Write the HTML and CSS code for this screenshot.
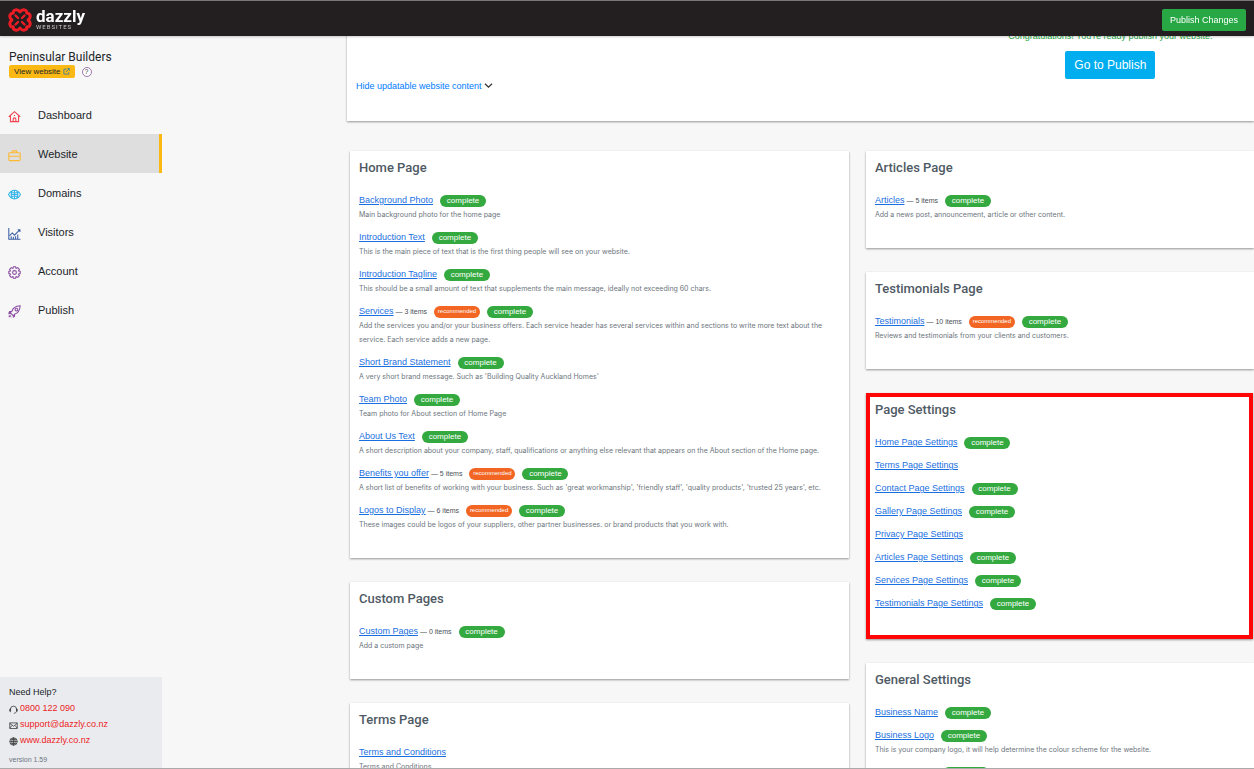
FILE: index.html
```
<!DOCTYPE html>
<html lang="en">
<head>
  <meta charset="UTF-8" />
  <meta name="viewport" content="width=device-width, initial-scale=1.0" />
  <title>Dazzly Websites - Website</title>
  <link rel="stylesheet" href="styles.css">
</head>
<body>

  <header class="topbar">
    <a class="logo" href="#">
      <svg class="logo-mark" viewBox="0 0 24 24" aria-hidden="true">
        <g fill="none" stroke="#ed1c24" stroke-width="3" stroke-linejoin="round" stroke-linecap="round">
          <path d="M12 4 C9.500 .5 5 1.500 5.200 5.200 C1.500 5 .5 9.500 4 12 C.5 14.500 1.500 19 5.200 18.800 C5 22.500 9.500 23.500 12 20 C14.500 23.500 19 22.500 18.800 18.800 C22.500 19 23.500 14.500 20 12 C23.500 9.500 22.500 5 18.800 5.200 C19 1.500 14.500 .5 12 4 Z"/>
          <path d="M7.500 7.500 L10 10 M16.500 7.500 L14 10 M7.500 16.500 L10 14 M16.500 16.500 L14 14" stroke-width="2.400"/>
        </g>
      </svg>
      <span class="logo-text">
        <span class="logo-name">dazzly</span>
        <span class="logo-sub">WEBSITES</span>
      </span>
    </a>
    <button class="btn btn-green" type="button">Publish Changes</button>
  </header>

  <div class="layout">
    <aside class="sidebar">
      <div class="site">
        <div class="site-name">Peninsular Builders</div>
        <div class="site-links">
          <a class="view-site" href="#">View website
            <svg viewBox="0 0 12 12" aria-hidden="true"><path d="M6 2H1.500v8.500H10V7M5 7l6-6M7.500 1H11v3.500" fill="none" stroke="#3d7f9f" stroke-width="1.500"/></svg>
          </a>
          <button class="help" type="button" aria-label="Help">?</button>
        </div>
      </div>

      <nav class="menu">
        <a href="#">
          <svg class="c-red" viewBox="0 0 24 24"><path d="M1.500 12.500 12 3l10.500 9.500M4.500 10v11.500h15V10M9.500 21.500V17a2.500 2.500 0 0 1 5 0v4.500M12 9v2"/></svg>
          Dashboard
        </a>
        <a class="active" href="#">
          <svg class="c-yellow" viewBox="0 0 24 24"><path d="M3 7h18a1.500 1.500 0 0 1 1.500 1.500v11A2 2 0 0 1 20.500 21.500h-17a2 2 0 0 1-2-2v-11A1.500 1.500 0 0 1 3 7zM8 7V3.500h8V7M1.500 13.500h21"/></svg>
          Website
        </a>
        <a href="#">
          <svg class="c-blue" viewBox="0 0 24 24"><path d="M1 12c2-4 6-8 11-8s9 4 11 8c-2 4-6 8-11 8s-9-4-11-8zM12 4v16M5 7.500c4 2 10 2 14 0M5 16.500c4-2 10-2 14 0M8 5c-3 5-3 9 0 14M16 5c3 5 3 9 0 14M7 12h10"/></svg>
          Domains
        </a>
        <a href="#">
          <svg class="c-navy" viewBox="0 0 24 24"><path d="M1.500 2v20.500H23M3 16l5-5 4 4 10-10M18 5h4v4M6 22v-5M10 22v-4M14 22v-5M18 22v-8"/></svg>
          Visitors
        </a>
        <a href="#">
          <svg class="c-purple" viewBox="0 0 24 24"><path d="M10 1.500h4l1 3 3-1.500 3 3-1.500 3 3 1v4l-3 1 1.500 3-3 3-3-1.500-1 3h-4l-1-3L6 21l-3-3 1.500-3-3-1v-4l3-1L3 6l3-3 3 1.500z"/><circle cx="12" cy="12" r="3.500"/></svg>
          Account
        </a>
        <a href="#">
          <svg class="c-purple" viewBox="0 0 24 24"><path d="M7 12C9 5 15 2 22.500 1.500 22 9 19 15 12 17l-2 3-6-6zM7 12H3l-1.500 3L5 16M12 17v4l-3 1.500M1.500 22.500l3.500-3.500M1.500 19l1-1M5 22.500l1-1"/><circle cx="15.500" cy="8.500" r="2.500"/></svg>
          Publish
        </a>
      </nav>

      <div class="support">
        <div class="support-title">Need Help?</div>
        <div class="support-row">
          <svg viewBox="0 0 24 24"><path d="M4 15V11a8 8 0 0 1 16 0v4M4 10c-4 1-4 7 0 8V10zM20 10c4 1 4 7 0 8V10zM19 18c-1 3-3 4-6 4"/></svg>
          <a href="#">0800 122 090</a>
        </div>
        <div class="support-row">
          <svg viewBox="0 0 24 24"><path d="M2 5h20v15H2zM2 6l10 8L22 6M2 19l6-7M22 19l-6-7"/></svg>
          <a href="#">support@dazzly.co.nz</a>
        </div>
        <div class="support-row">
          <svg viewBox="0 0 24 24"><path d="M12 2a10 10 0 1 0 0 20 10 10 0 0 0 0-20zM2 12h20M12 2v20M4 7h16M4 17h16M12 2c-6 6-6 14 0 20M12 2c6 6 6 14 0 20"/></svg>
          <a href="#">www.dazzly.co.nz</a>
        </div>
        <div class="version">version 1.59</div>
      </div>
    </aside>

    <main class="content">
      <section class="card intro">
        <a class="toggle" href="#">Hide updatable website content
          <svg viewBox="0 0 10 8" aria-hidden="true"><path d="M1 2l4 4 4-4" fill="none" stroke="#333" stroke-width="1.400"/></svg>
        </a>
        <div class="status">
          <p>Congratulations! You're ready publish your website.</p>
          <button class="btn btn-blue" type="button">Go to Publish</button>
        </div>
      </section>

      <div class="columns">
        <div class="column">
          <section class="card">
            <h2>Home Page</h2>
            <ul class="items">
              <li>
                <div class="item"><a href="#">Background Photo</a><span class="badge">complete</span></div>
                <p>Main background photo for the home page</p>
              </li>
              <li>
                <div class="item"><a href="#">Introduction Text</a><span class="badge">complete</span></div>
                <p>This is the main piece of text that is the first thing people will see on your website.</p>
              </li>
              <li>
                <div class="item"><a href="#">Introduction Tagline</a><span class="badge">complete</span></div>
                <p>This should be a small amount of text that supplements the main message, ideally not exceeding 60 chars.</p>
              </li>
              <li>
                <div class="item"><a href="#">Services</a><span class="count">— 3 items</span><span class="badge recommended">recommended</span><span class="badge">complete</span></div>
                <p>Add the services you and/or your business offers. Each service header has several services within and sections to write more text about the service. Each service adds a new page.</p>
              </li>
              <li>
                <div class="item"><a href="#">Short Brand Statement</a><span class="badge">complete</span></div>
                <p>A very short brand message. Such as 'Building Quality Auckland Homes'</p>
              </li>
              <li>
                <div class="item"><a href="#">Team Photo</a><span class="badge">complete</span></div>
                <p>Team photo for About section of Home Page</p>
              </li>
              <li>
                <div class="item"><a href="#">About Us Text</a><span class="badge">complete</span></div>
                <p>A short description about your company, staff, qualifications or anything else relevant that appears on the About section of the Home page.</p>
              </li>
              <li>
                <div class="item"><a href="#">Benefits you offer</a><span class="count">— 5 items</span><span class="badge recommended">recommended</span><span class="badge">complete</span></div>
                <p>A short list of benefits of working with your business. Such as 'great workmanship', 'friendly staff', 'quality products', 'trusted 25 years', etc.</p>
              </li>
              <li>
                <div class="item"><a href="#">Logos to Display</a><span class="count">— 6 items</span><span class="badge recommended">recommended</span><span class="badge">complete</span></div>
                <p>These images could be logos of your suppliers, other partner businesses. or brand products that you work with.</p>
              </li>
            </ul>
          </section>

          <section class="card">
            <h2>Custom Pages</h2>
            <ul class="items">
              <li>
                <div class="item"><a href="#">Custom Pages</a><span class="count">— 0 items</span><span class="badge">complete</span></div>
                <p>Add a custom page</p>
              </li>
            </ul>
          </section>

          <section class="card">
            <h2>Terms Page</h2>
            <ul class="items">
              <li>
                <div class="item"><a href="#">Terms and Conditions</a></div>
                <p>Terms and Conditions</p>
              </li>
            </ul>
          </section>
        </div>

        <div class="column">
          <section class="card">
            <h2>Articles Page</h2>
            <ul class="items">
              <li>
                <div class="item"><a href="#">Articles</a><span class="count">— 5 items</span><span class="badge">complete</span></div>
                <p>Add a news post, announcement, article or other content.</p>
              </li>
            </ul>
          </section>

          <section class="card">
            <h2>Testimonials Page</h2>
            <ul class="items">
              <li>
                <div class="item"><a href="#">Testimonials</a><span class="count">— 10 items</span><span class="badge recommended">recommended</span><span class="badge">complete</span></div>
                <p>Reviews and testimonials from your clients and customers.</p>
              </li>
            </ul>
          </section>

          <section class="card highlight">
            <h2>Page Settings</h2>
            <ul class="items">
              <li><div class="item"><a href="#">Home Page Settings</a><span class="badge">complete</span></div></li>
              <li><div class="item"><a href="#">Terms Page Settings</a></div></li>
              <li><div class="item"><a href="#">Contact Page Settings</a><span class="badge">complete</span></div></li>
              <li><div class="item"><a href="#">Gallery Page Settings</a><span class="badge">complete</span></div></li>
              <li><div class="item"><a href="#">Privacy Page Settings</a></div></li>
              <li><div class="item"><a href="#">Articles Page Settings</a><span class="badge">complete</span></div></li>
              <li><div class="item"><a href="#">Services Page Settings</a><span class="badge">complete</span></div></li>
              <li><div class="item"><a href="#">Testimonials Page Settings</a><span class="badge">complete</span></div></li>
            </ul>
          </section>

          <section class="card">
            <h2>General Settings</h2>
            <ul class="items">
              <li><div class="item"><a href="#">Business Name</a><span class="badge">complete</span></div></li>
              <li>
                <div class="item"><a href="#">Business Logo</a><span class="badge">complete</span></div>
                <p>This is your company logo, it will help determine the colour scheme for the website.</p>
              </li>
              <li><div class="item"><a href="#">Business Email</a><span class="badge">complete</span></div></li>
            </ul>
          </section>
        </div>
      </div>
    </main>
  </div>

</body>
</html>
```
FILE: styles.css
```
* {
  box-sizing: border-box;
}
body {
  margin: 0;
  height: 100vh;
  overflow: hidden;
  background: #f7f7f7;
  color: #212529;
  font-family: "Liberation Sans", Arial, sans-serif;
  font-size: 9px;
  line-height: 14px;
}
h2, p, ul {
  margin: 0;
  padding: 0;
}
a {
  text-decoration: none;
}
button {
  font-family: inherit;
  cursor: pointer;
}

/* top bar */
.topbar {
  position: fixed;
  top: 0;
  left: 0;
  right: 0;
  z-index: 10;
  height: 36px;
  padding: 3px 8px 0;
  display: flex;
  align-items: center;
  justify-content: space-between;
  background: #231f20;
  border-top: 1px solid #777;
  box-shadow: 0 1px 2px rgba(0, 0, 0, 0.2);
}
.logo {
  display: flex;
  align-items: center;
  gap: 4px;
  color: #fff;
  font-family: Roboto, sans-serif;
}
.logo-mark {
  width: 24px;
  height: 24px;
}
.logo-text {
  display: flex;
  flex-direction: column;
  padding-bottom: 2px;
}
.logo-name {
  font-size: 17px;
  font-weight: 700;
  line-height: 16px;
}
.logo-sub {
  font-size: 6px;
  line-height: 6px;
  letter-spacing: 1px;
  color: #ccc;
}
.btn {
  border: 0;
  border-radius: 2px;
  color: #fff;
}
.btn-green {
  height: 22px;
  padding: 0 8px;
  font-size: 9px;
  background: #28a745;
}
.btn-blue {
  height: 28px;
  padding: 0 9px;
  font-size: 12px;
  background: #00adef;
}

/* sidebar */
.layout {
  display: flex;
  height: 100vh;
  overflow: hidden;
  border-bottom: 1px solid #aaa;
}
.sidebar {
  flex: 0 0 162px;
  margin-right: 185px;
  padding-top: 50px;
  display: flex;
  flex-direction: column;
}
.site {
  height: 45px;
  padding-left: 9px;
}
.site-name {
  font-family: Roboto, sans-serif;
  font-size: 12px;
  line-height: 15px;
}
.site-links {
  display: flex;
  align-items: center;
  gap: 7px;
}
.view-site {
  display: flex;
  align-items: center;
  gap: 2px;
  height: 13px;
  padding: 0 5px;
  border-radius: 2px;
  background: #fdb913;
  color: #212529;
  font-size: 8px;
}
.view-site svg {
  width: 7px;
  height: 7px;
}
.help {
  width: 10px;
  height: 10px;
  padding: 0;
  border: 1px solid #9a78b0;
  border-radius: 50%;
  background: #fff;
  color: #444;
  font-size: 7px;
  line-height: 8px;
}
.menu a {
  display: flex;
  align-items: center;
  gap: 17px;
  height: 39px;
  padding-left: 8px;
  color: #212529;
  font-size: 11px;
}
.menu a.active {
  background: #dedede;
  border-right: 3px solid #fdb913;
}
.menu svg {
  width: 13px;
  height: 13px;
  margin-top: 3px;
  fill: none;
  stroke: currentColor;
  stroke-width: 2;
}
.c-red { color: #ef4550; }
.c-yellow { color: #fdb933; }
.c-blue { color: #35b5e9; }
.c-navy { color: #3d62a5; }
.c-purple { color: #8c4fa3; }

.support {
  margin-top: auto;
  height: 91px;
  padding: 7px 9px 0;
  background: #e9ebef;
}
.support-title,
.support-row {
  height: 16px;
  line-height: 16px;
}
.support-row {
  display: flex;
  align-items: center;
  gap: 2px;
}
.support-row a {
  color: #ed1c24;
}
.support-row svg {
  width: 9px;
  height: 9px;
  margin-top: 2px;
  fill: none;
  stroke: #333;
  stroke-width: 2;
}
.version {
  margin-top: 5px;
  font-size: 7px;
  color: #6c757d;
}

/* content */
.content {
  flex: 1;
  min-width: 0;
}
.card {
  padding: 8px 9px 18px;
  background: #fff;
  box-shadow: 0 1px 2px rgba(0, 0, 0, 0.4);
}
.intro {
  display: flex;
  align-items: flex-end;
  justify-content: space-between;
  padding: 29px 0 28px 9px;
}
.toggle {
  color: #007bff;
}
.toggle svg {
  width: 9px;
  height: 7px;
}
.status {
  width: 32%;
  margin-bottom: 14px;
  text-align: center;
  color: #28a745;
}
.status .btn {
  margin-top: 8px;
}
.columns {
  display: grid;
  grid-template-columns: 9fr 7fr;
  gap: 17px;
  padding: 30px 0 0 3px;
}
.column {
  display: flex;
  flex-direction: column;
  gap: 24px;
}
.card h2 {
  margin-bottom: 16px;
  font-family: Roboto, sans-serif;
  font-size: 13px;
  font-weight: 500;
  line-height: 18px;
  color: #4f5a64;
}
.card.highlight {
  margin-right: 1px;
  padding-bottom: 20px;
  outline: 4px solid #ff0505;
  outline-offset: -4px;
}
.items {
  list-style: none;
}
.items li {
  margin-bottom: 9px;
}
.item {
  display: flex;
  align-items: center;
  height: 14px;
}
.item a {
  color: #1a6fe0;
  text-decoration: underline;
}
.items p {
  padding-top: 1px;
  margin-bottom: -1px;
  font-family: Inter, sans-serif;
  font-size: 7px;
  color: #6c757d;
}
.count {
  margin-left: 2px;
  padding-top: 1px;
  font-size: 7px;
  color: #495057;
}
.badge {
  width: 46px;
  height: 12px;
  margin-top: 2px;
  margin-left: 7px;
  border-radius: 6px;
  background: #34a93f;
  color: #fff;
  font-size: 8px;
  line-height: 11px;
  text-align: center;
}
.recommended {
  background: #f26522;
  font-size: 6px;
}
```
